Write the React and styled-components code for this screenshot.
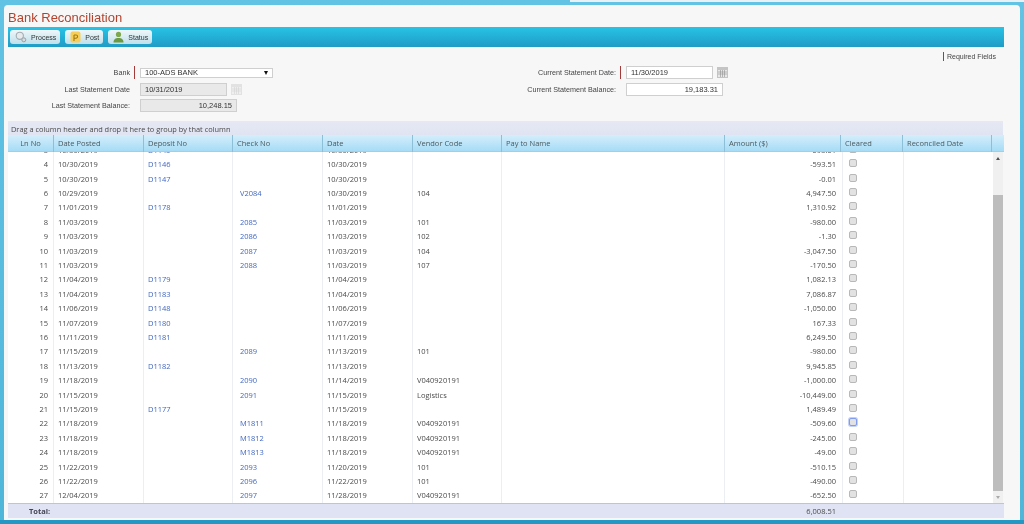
import React from 'react';
import styled, { createGlobalStyle } from 'styled-components';

const GlobalStyle = createGlobalStyle`
  html, body { margin: 0; padding: 0; height: 100%; overflow: hidden; background: #5cc0e2; }
  #root { height: 100%; }
`;

const HEAD_COLS = '45px 90px 89px 90px 90px 89px 223px 116px 62px 89px 1fr';
const ROW_COLS = '45px 90px 89px 90px 90px 89px 223px 117px 62px 90px';

const rows = [
  ['3', '10/30/2019', 'D1145', '', '10/30/2019', '', '-593.51'],
  ['4', '10/30/2019', 'D1146', '', '10/30/2019', '', '-593.51'],
  ['5', '10/30/2019', 'D1147', '', '10/30/2019', '', '-0.01'],
  ['6', '10/29/2019', '', 'V2084', '10/30/2019', '104', '4,947.50'],
  ['7', '11/01/2019', 'D1178', '', '11/01/2019', '', '1,310.92'],
  ['8', '11/03/2019', '', '2085', '11/03/2019', '101', '-980.00'],
  ['9', '11/03/2019', '', '2086', '11/03/2019', '102', '-1.30'],
  ['10', '11/03/2019', '', '2087', '11/03/2019', '104', '-3,047.50'],
  ['11', '11/03/2019', '', '2088', '11/03/2019', '107', '-170.50'],
  ['12', '11/04/2019', 'D1179', '', '11/04/2019', '', '1,082.13'],
  ['13', '11/04/2019', 'D1183', '', '11/04/2019', '', '7,086.87'],
  ['14', '11/06/2019', 'D1148', '', '11/06/2019', '', '-1,050.00'],
  ['15', '11/07/2019', 'D1180', '', '11/07/2019', '', '167.33'],
  ['16', '11/11/2019', 'D1181', '', '11/11/2019', '', '6,249.50'],
  ['17', '11/15/2019', '', '2089', '11/13/2019', '101', '-980.00'],
  ['18', '11/13/2019', 'D1182', '', '11/13/2019', '', '9,945.85'],
  ['19', '11/18/2019', '', '2090', '11/14/2019', 'V040920191', '-1,000.00'],
  ['20', '11/15/2019', '', '2091', '11/15/2019', 'Logistics', '-10,449.00'],
  ['21', '11/15/2019', 'D1177', '', '11/15/2019', '', '1,489.49'],
  ['22', '11/18/2019', '', 'M1811', '11/18/2019', 'V040920191', '-509.60', true],
  ['23', '11/18/2019', '', 'M1812', '11/18/2019', 'V040920191', '-245.00'],
  ['24', '11/18/2019', '', 'M1813', '11/18/2019', 'V040920191', '-49.00'],
  ['25', '11/22/2019', '', '2093', '11/20/2019', '101', '-510.15'],
  ['26', '11/22/2019', '', '2096', '11/22/2019', '101', '-490.00'],
  ['27', '12/04/2019', '', '2097', '11/28/2019', 'V040920191', '-652.50'],
];

const Page = styled.div`
  height: 524px;
  padding: 5px 4px 4px 4px;
  box-sizing: border-box;
  position: relative;
  background: linear-gradient(#62c3e4, #4fb6da 520px, #2398c4 520px);
`;

const TopStrip = styled.div`
  position: absolute;
  top: 0;
  left: 570px;
  right: 0;
  height: 2px;
  background: #e8f2f6;
`;

const Panel = styled.div`
  height: 100%;
  background: #f7f7f7;
  border-radius: 4px 4px 0 0;
  padding: 0 17px 0 4px;
  box-sizing: border-box;
  display: flex;
  flex-direction: column;
  font-family: "Liberation Sans", Arial, sans-serif;
  filter: blur(0.3px);
`;

const Title = styled.h1`
  margin: 0;
  height: 22px;
  font-size: 13px;
  line-height: 25px;
  font-weight: 400;
  color: #b2432f;
`;

const Toolbar = styled.div`
  height: 20px;
  margin-right: -1px;
  display: flex;
  align-items: flex-start;
  gap: 5px;
  padding: 3px 0 0 2px;
  box-sizing: border-box;
  background: linear-gradient(#28c3e6, #1f9cc6);
`;

const ToolButton = styled.button`
  height: 14px;
  padding: 0 4px 0 5px;
  display: flex;
  align-items: center;
  gap: 4px;
  border: 0;
  border-radius: 3px;
  background: linear-gradient(#eef7fa, #bfe0ea);
  font: 7px "Liberation Sans", Arial, sans-serif;
  color: #333;
`;

const Required = styled.div`
  align-self: flex-end;
  height: 9px;
  margin: 5px 7px 0 0;
  padding-left: 3px;
  border-left: 1px solid #a33a3a;
  font-size: 7px;
  line-height: 9px;
  color: #444;
`;

const FormArea = styled.div`
  height: 60px;
  padding-top: 5px;
  display: grid;
  grid-template-columns: 510px 1fr;
  box-sizing: border-box;
`;

const FormColumn = styled.div`
  display: flex;
  flex-direction: column;
  gap: 3.5px;
`;

const FormRow = styled.div`
  height: 13px;
  display: flex;
  align-items: center;
`;

const Label = styled.label`
  width: ${p => p.$w}px;
  text-align: right;
  font-size: 7.2px;
  color: #444;
  flex: none;
`;

const Marker = styled.span`
  width: 1px;
  height: 13px;
  margin: 0 5px 0 4px;
  background: ${p => (p.$on ? '#a33a3a' : 'transparent')};
  flex: none;
`;

const Field = styled.div`
  width: ${p => p.$w}px;
  height: ${p => p.$h || 13}px;
  box-sizing: border-box;
  padding: 0 4px;
  display: flex;
  align-items: center;
  justify-content: ${p => (p.$right ? 'flex-end' : 'space-between')};
  border: 1px solid #cfcfcf;
  background: ${p => (p.$off ? '#e9e9e9' : '#fff')};
  font-size: 7.5px;
  color: #333;
`;

const Arrow = styled.span`
  width: 0;
  height: 0;
  border-left: 2.5px solid transparent;
  border-right: 2.5px solid transparent;
  border-top: 4px solid #111;
`;

const CalIcon = ({ faded }) => (
  <svg width="11" height="11" viewBox="0 0 11 11" style={{ marginLeft: 4, flex: 'none' }}>
    <rect width="11" height="11" fill={faded ? '#e2e2e2' : '#c4c4c4'} />
    <rect x="1" y="3" width="9" height="7" fill={faded ? '#efefef' : '#e8e8e8'} />
    <path d="M1 5h9M1 7h9M3.5 3v7M5.5 3v7M7.5 3v7" stroke={faded ? '#d4d4d4' : '#909090'} strokeWidth=".6" />
  </svg>
);

const GroupBar = styled.div`
  height: 14px;
  padding-left: 3px;
  background: linear-gradient(#e6e8f4, #e0e4f2);
  font: 7.4px/16px "Open Sans", "DejaVu Sans", sans-serif;
  color: #4a4a4a;
`;

const Head = styled.div`
  height: 17px;
  margin-right: -1px;
  display: grid;
  grid-template-columns: ${HEAD_COLS};
  background: linear-gradient(#d4eefb, #a6dcf6);
  border-bottom: 1px solid #9ed0ea;
  box-sizing: border-box;
  position: relative;
  z-index: 1;
`;

const HeadCell = styled.div`
  padding-left: ${p => (p.$center ? 0 : 4)}px;
  text-align: ${p => (p.$center ? 'center' : 'left')};
  border-left: ${p => (p.$first ? 0 : '1px solid #8dbfd8')};
  font: 7.5px/17px "Open Sans", "DejaVu Sans", sans-serif;
  color: #4c5a60;
`;

const Body = styled.div`
  flex: 1;
  min-height: 0;
  overflow: hidden;
  background: #fff;
  display: grid;
  grid-template-columns: 1fr 10px;
`;

const line = x => `linear-gradient(#eceff2, #eceff2) ${x}px 0 / 1px 100% no-repeat`;

const Rows = styled.div`
  margin-top: -9.5px;
  background: ${[45, 135, 224, 314, 404, 493, 716, 834, 895].map(line).join(', ')};
`;

const Row = styled.div`
  height: 14.41px;
  display: grid;
  grid-template-columns: ${ROW_COLS};
  align-items: center;
`;

const Cell = styled.div`
  padding: 0 ${p => (p.$right ? 5 : 0)}px 0 ${p => (p.$indent ? 8 : 5)}px;
  text-align: ${p => (p.$right ? 'right' : 'left')};
  white-space: nowrap;
  font: 7.5px/14px "Open Sans", "DejaVu Sans", sans-serif;
  color: ${p => (p.$link ? '#4268c2' : '#4a4a4a')};
`;

const Check = styled.span`
  display: block;
  box-sizing: border-box;
  width: 8px;
  height: 8px;
  margin: -2px 0 0 3px;
  border-radius: 2px;
  background: #e2e2e2;
  border: 1px solid ${p => (p.$focus ? '#7f9cf0' : '#b8b8b8')};
  box-shadow: ${p => (p.$focus ? '0 0 0 1px #c3d0f8' : 'none')};
`;

const Scrollbar = styled.div`
  display: flex;
  flex-direction: column;
  background: #f0f0f0;
`;

const ScrollArrow = styled.span`
  height: 12px;
  flex: none;
  display: flex;
  align-items: center;
  justify-content: center;
  &::after {
    content: '';
    border-left: 2.5px solid transparent;
    border-right: 2.5px solid transparent;
    ${p => (p.$down ? 'border-top: 3px solid #aaa;' : 'border-bottom: 3px solid #505050;')}
  }
`;

const ScrollTrack = styled.div`
  flex: 1;
  padding-top: 31px;
  display: flex;
`;

const Thumb = styled.div`
  flex: 1;
  background: #bdbdbd;
`;

const Total = styled.div`
  height: 15px;
  margin-right: -1px;
  display: grid;
  grid-template-columns: ${ROW_COLS};
  background: #e0e3f3;
  border-top: 1px solid #b9c6d8;
  box-sizing: border-box;
  font: 7.5px/14px "Open Sans", "DejaVu Sans", sans-serif;
  color: #4a4a4a;
`;

const TotalLabel = styled.b`
  grid-column: 1 / 8;
  padding-left: 21px;
  color: #445;
`;

const TotalAmount = styled.span`
  text-align: right;
  padding-right: 5px;
`;

const Footer = styled.div`
  height: 2px;
`;

const Magnifier = () => (
  <svg width="12" height="12" viewBox="0 0 12 12">
    <circle cx="4.8" cy="4.8" r="3.6" fill="#e6eaec" stroke="#a3adb2" strokeWidth="1.1" />
    <circle cx="8.8" cy="8.8" r="2" fill="#d6dcdf" stroke="#98a2a7" strokeWidth="1" />
  </svg>
);

const PostIcon = () => (
  <svg width="11" height="12" viewBox="0 0 11 12">
    <rect x="0.5" y="0.5" width="10" height="11" rx="2" fill="#f7cf58" />
    <path d="M4 4v6M4 4h2a1.5 1.5 0 010 3.2h-2" fill="none" stroke="#a07a10" strokeWidth="1.1" />
  </svg>
);

const UserIcon = () => (
  <svg width="11" height="12" viewBox="0 0 11 12">
    <circle cx="5.5" cy="3.4" r="2.6" fill="#7da84c" />
    <path d="M0.5 11.5c0-3.4 2-4.6 5-4.6s5 1.2 5 4.6z" fill="#6b9a42" />
  </svg>
);

const headers = ['Ln No', 'Date Posted', 'Deposit No', 'Check No', 'Date', 'Vendor Code', 'Pay to Name', 'Amount ($)', 'Cleared', 'Reconciled Date', ''];

export default function App() {
  return (
    <Page>
      <GlobalStyle />
      <TopStrip />
      <Panel>
        <Title>Bank Reconciliation</Title>
        <Toolbar>
          <ToolButton><Magnifier />Process</ToolButton>
          <ToolButton><PostIcon />Post</ToolButton>
          <ToolButton><UserIcon />Status</ToolButton>
        </Toolbar>
        <Required>Required Fields</Required>
        <FormArea>
          <FormColumn>
            <FormRow>
              <Label $w={122}>Bank</Label><Marker $on />
              <Field $w={133} $h={10}>100-ADS BANK<Arrow /></Field>
            </FormRow>
            <FormRow>
              <Label $w={122}>Last Statement Date</Label><Marker />
              <Field $w={87} $off>10/31/2019</Field><CalIcon faded />
            </FormRow>
            <FormRow>
              <Label $w={122}>Last Statement Balance:</Label><Marker />
              <Field $w={97} $off $right>10,248.15</Field>
            </FormRow>
          </FormColumn>
          <FormColumn>
            <FormRow>
              <Label $w={98}>Current Statement Date:</Label><Marker $on />
              <Field $w={87}>11/30/2019</Field><CalIcon />
            </FormRow>
            <FormRow>
              <Label $w={98}>Current Statement Balance:</Label><Marker />
              <Field $w={97} $right>19,183.31</Field>
            </FormRow>
          </FormColumn>
        </FormArea>
        <GroupBar>Drag a column header and drop it here to group by that column</GroupBar>
        <Head>
          {headers.map((h, i) => (
            <HeadCell key={i} $first={i === 0} $center={i === 0}>{h}</HeadCell>
          ))}
        </Head>
        <Body>
          <Rows>
            {rows.map(r => (
              <Row key={r[0]}>
                <Cell $right>{r[0]}</Cell>
                <Cell>{r[1]}</Cell>
                <Cell $link>{r[2]}</Cell>
                <Cell $link $indent>{r[3]}</Cell>
                <Cell>{r[4]}</Cell>
                <Cell>{r[5]}</Cell>
                <Cell />
                <Cell $right>{r[6]}</Cell>
                <Cell><Check $focus={r[7]} /></Cell>
                <Cell />
              </Row>
            ))}
          </Rows>
          <Scrollbar>
            <ScrollArrow />
            <ScrollTrack><Thumb /></ScrollTrack>
            <ScrollArrow $down />
          </Scrollbar>
        </Body>
        <Total>
          <TotalLabel>Total:</TotalLabel>
          <TotalAmount>6,008.51</TotalAmount>
        </Total>
        <Footer />
      </Panel>
    </Page>
  );
}
